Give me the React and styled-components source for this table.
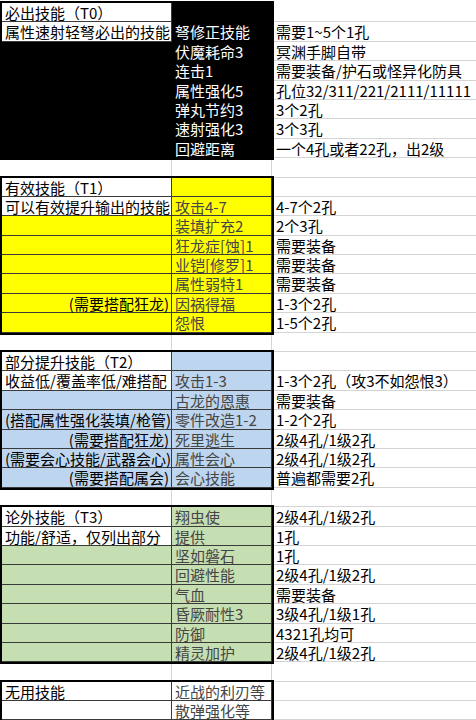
import styled, { createGlobalStyle } from "styled-components";

const Global = createGlobalStyle`
    body {
        margin: 0;
        background: #fff;
        font-family: "Noto Sans CJK SC", "Noto Sans", sans-serif;
    }
    * { box-sizing: border-box; }
`;

const ROW = 19.4;

const Sheet = styled.div`
    padding: 3px 0 0 2px;
    width: 476px;
    overflow: hidden;
`;

const Section = styled.div`
    display: flex;
`;

const Block = styled.div`
    position: relative;
    z-index: 1;
    border: 2px solid #000;
    margin: -2px -2px -2px -2px;
    width: 274px;
    flex: none;
`;

const BlockRow = styled.div`
    display: grid;
    grid-template-columns: 170px 100px;
    height: ${ROW}px;
`;

const Cell = styled.div`
    height: ${ROW}px;
    line-height: ${ROW}px;
    font-size: 15px;
    white-space: nowrap;
    overflow: visible;
    padding: 0 ${(p) => (p.$right ? "2px" : "0")} 0 3px;
    text-align: ${(p) => (p.$right ? "right" : "left")};
    background: ${(p) => p.$bg || "#fff"};
    color: ${(p) => p.$color || "#000"};
    border-bottom: 1px solid ${(p) => p.$line || "#d4d4d4"};
    border-right: 1px solid ${(p) => p.$line || "#d4d4d4"};
    direction: ${(p) => (p.$right ? "rtl" : "ltr")};
    unicode-bidi: plaintext;
`;

const SkillCell = styled(Cell)`
    color: ${(p) => p.$color || "#454545"};
`;

const Side = styled.div`
    flex: 1;
    min-width: 0;
`;

const NoteCell = styled(Cell)`
    border-right: none;
    padding-left: 4px;
`;

const BlankRow = styled.div`
    display: grid;
    grid-template-columns: 170px 100px 1fr;
    height: ${ROW}px;
`;

const sections = [
    {
        fill: "#000",
        skill: "#fff",
        line: "#000",
        rows: [
            ["必出技能（T0）", "", "", false],
            ["属性速射轻弩必出的技能", "弩修正技能", "需要1~5个1孔", false],
            ["", "伏魔耗命3", "冥渊手脚自带"],
            ["", "连击1", "需要装备/护石或怪异化防具"],
            ["", "属性强化5", "孔位32/311/221/2111/11111"],
            ["", "弹丸节约3", "3个2孔"],
            ["", "速射强化3", "3个3孔"],
            ["", "回避距离", "一个4孔或者22孔，出2级"],
        ],
    },
    {
        fill: "#ffff00",
        line: "#3a3a3a",
        rows: [
            ["有效技能（T1）", "", ""],
            ["可以有效提升输出的技能", "攻击4-7", "4-7个2孔"],
            ["", "装填扩充2", "2个3孔"],
            ["", "狂龙症[蚀]1", "需要装备"],
            ["", "业铠[修罗]1", "需要装备"],
            ["", "属性弱特1", "需要装备"],
            ["(需要搭配狂龙)", "因祸得福", "1-3个2孔"],
            ["", "怨恨", "1-5个2孔"],
        ],
    },
    {
        fill: "#bdd5ee",
        line: "#3a3a3a",
        rows: [
            ["部分提升技能（T2）", "", ""],
            ["收益低/覆盖率低/难搭配", "攻击1-3", "1-3个2孔（攻3不如怨恨3）"],
            ["", "古龙的恩惠", "需要装备"],
            ["(搭配属性强化装填/枪管)", "零件改造1-2", "1-2个2孔"],
            ["(需要搭配狂龙)", "死里逃生", "2级4孔/1级2孔"],
            ["(需要会心技能/武器会心)", "属性会心", "2级4孔/1级2孔"],
            ["(需要搭配属会)", "会心技能", "普遍都需要2孔"],
        ],
    },
    {
        fill: "#c6dfb2",
        line: "#3a3a3a",
        rows: [
            ["论外技能（T3）", "翔虫使", "2级4孔/1级2孔"],
            ["功能/舒适，仅列出部分", "提供", "1孔"],
            ["", "坚如磐石", "1孔"],
            ["", "回避性能", "2级4孔/1级2孔"],
            ["", "气血", "需要装备"],
            ["", "昏厥耐性3", "3级4孔/1级1孔"],
            ["", "防御", "4321孔均可"],
            ["", "精灵加护", "2级4孔/1级2孔"],
        ],
    },
    {
        fill: "#fff",
        line: "#3a3a3a",
        rows: [
            ["无用技能", "近战的利刃等", ""],
            ["", "散弹强化等", ""],
        ],
    },
];

function SkillSection({ data }) {
    return (
        <Section>
            <Block>
                {data.rows.map((r, i) => {
                    const head = i < 2;
                    const right = r[0].startsWith("(");
                    return (
                        <BlockRow key={i}>
                            <Cell
                                $bg={head ? "#fff" : data.fill}
                                $line={data.line === "#000" && !head ? "#000" : "#3a3a3a"}
                                $right={right}
                            >
                                {r[0]}
                            </Cell>
                            <SkillCell $bg={data.fill} $color={data.skill} $line={data.line}>
                                {r[1]}
                            </SkillCell>
                        </BlockRow>
                    );
                })}
            </Block>
            <Side>
                {data.rows.map((r, i) => (
                    <NoteCell key={i}>{r[2]}</NoteCell>
                ))}
            </Side>
        </Section>
    );
}

function Blank() {
    return (
        <BlankRow>
            <Cell />
            <Cell />
            <NoteCell />
        </BlankRow>
    );
}

export default function App() {
    return (
        <>
            <Global />
            <Sheet>
                {sections.map((s, i) => (
                    <div key={i}>
                        {i > 0 && <Blank />}
                        <SkillSection data={s} />
                    </div>
                ))}
            </Sheet>
        </>
    );
}
